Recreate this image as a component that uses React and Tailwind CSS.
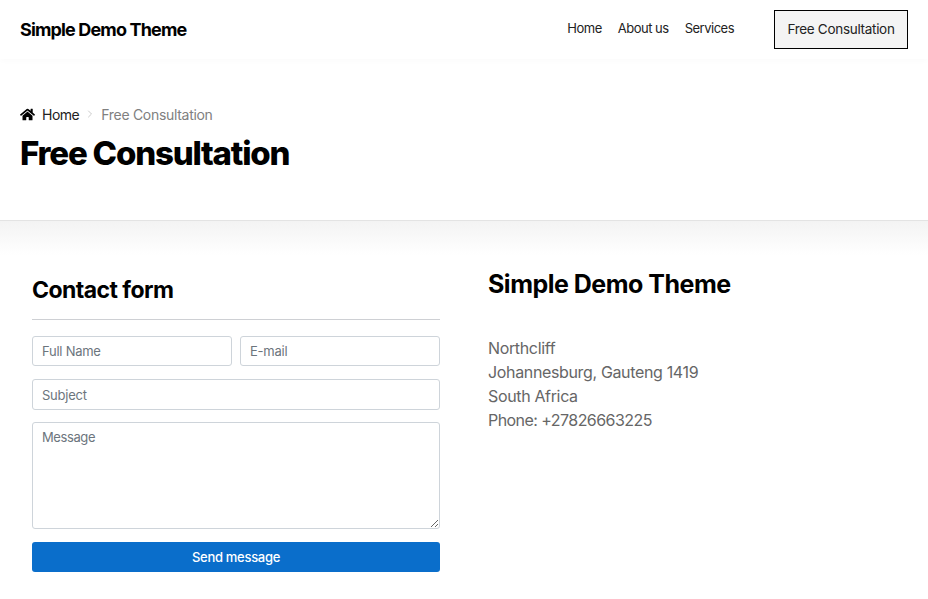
import { FaHome } from 'react-icons/fa';
import { FiChevronRight } from 'react-icons/fi';

function App() {
  return (
    <div className="min-h-[599px] bg-white font-['Inter','Liberation_Sans',sans-serif] text-black overflow-hidden">
      {/* Header */}
      <header className="h-[59px] flex items-center justify-between pl-5 pr-5 bg-white shadow-[0_2px_6px_rgba(0,0,0,0.02)]">
        <div className="text-[18px] font-bold tracking-[-0.85px]">Simple Demo Theme</div>
        <div className="flex items-center">
          <nav className="flex gap-4 text-[13px] text-[#222] tracking-[-0.5px] mr-10 -mt-[1px]">
            <a>Home</a>
            <a>About us</a>
            <a>Services</a>
          </nav>
          <button className="w-[134px] h-[39px] border border-black bg-[#f4f4f4] text-[13.5px] text-[#222] tracking-[-0.3px]">Free Consultation</button>
        </div>
      </header>

      {/* Page title */}
      <section className="h-[162px] pl-5 pt-[44px] border-b border-[#e3e3e3]">
        <div className="flex items-center text-[14px] h-[22px]">
          <FaHome className="w-[15px] h-[15px] text-black mr-[7px]" />
          <span className="text-[#222] tracking-[-0.5px]">Home</span>
          <FiChevronRight className="w-3 h-3 mx-[5px] text-[#ccc]" />
          <span className="text-[#808080] tracking-[-0.3px]">Free Consultation</span>
        </div>
        <h1 className="text-[33px] leading-[40px] font-extrabold tracking-[-1.2px] mt-[8px]">Free Consultation</h1>
      </section>

      {/* Content */}
      <section className="bg-gradient-to-b from-[#f3f3f3] to-white to-[34px] px-8 flex gap-12">
        <div className="w-[408px] pt-[53px]">
          <h2 className="text-[23px] leading-[32px] font-bold tracking-[-0.55px]">Contact form</h2>
          <div className="border-b border-[#ced0d4] mt-[13px] mb-[16px]"></div>
          <div className="flex gap-2">
            <input placeholder="Full Name" className="w-[200px] h-[30px] border border-[#ced4da] rounded-[3px] px-[9px] text-[13px] tracking-[-0.25px] placeholder:text-[#6c757d] bg-white" />
            <input placeholder="E-mail" className="w-[200px] h-[30px] border border-[#ced4da] rounded-[3px] px-[9px] text-[13px] tracking-[-0.25px] placeholder:text-[#6c757d] bg-white" />
          </div>
          <input placeholder="Subject" className="block w-full h-[31px] mt-[13px] border border-[#ced4da] rounded-[3px] px-[9px] text-[13px] tracking-[-0.25px] placeholder:text-[#6c757d] bg-white" />
          <textarea placeholder="Message" className="block w-full h-[107px] mt-[12px] border border-[#ced4da] rounded-[3px] px-[9px] py-[5px] text-[13px] tracking-[-0.4px] placeholder:text-[#6c757d] bg-white" />
          <button className="block w-full h-[30px] mt-[13px] pt-[1px] bg-[#0a6ecb] rounded-[3px] text-white text-[13px] font-medium tracking-[-0.3px]">Send message</button>
        </div>
        <div className="pt-[46px]">
          <h2 className="text-[25px] leading-[34px] font-bold tracking-[-0.5px]">Simple Demo Theme</h2>
          <div className="mt-[35px] text-[16px] leading-[24px] text-[#666] tracking-[-0.35px]">
            <div>Northcliff</div>
            <div>Johannesburg, Gauteng 1419</div>
            <div>South Africa</div>
            <div className="tracking-[-0.55px]">Phone: +27826663225</div>
          </div>
        </div>
      </section>
    </div>
  );
}

export default App;
